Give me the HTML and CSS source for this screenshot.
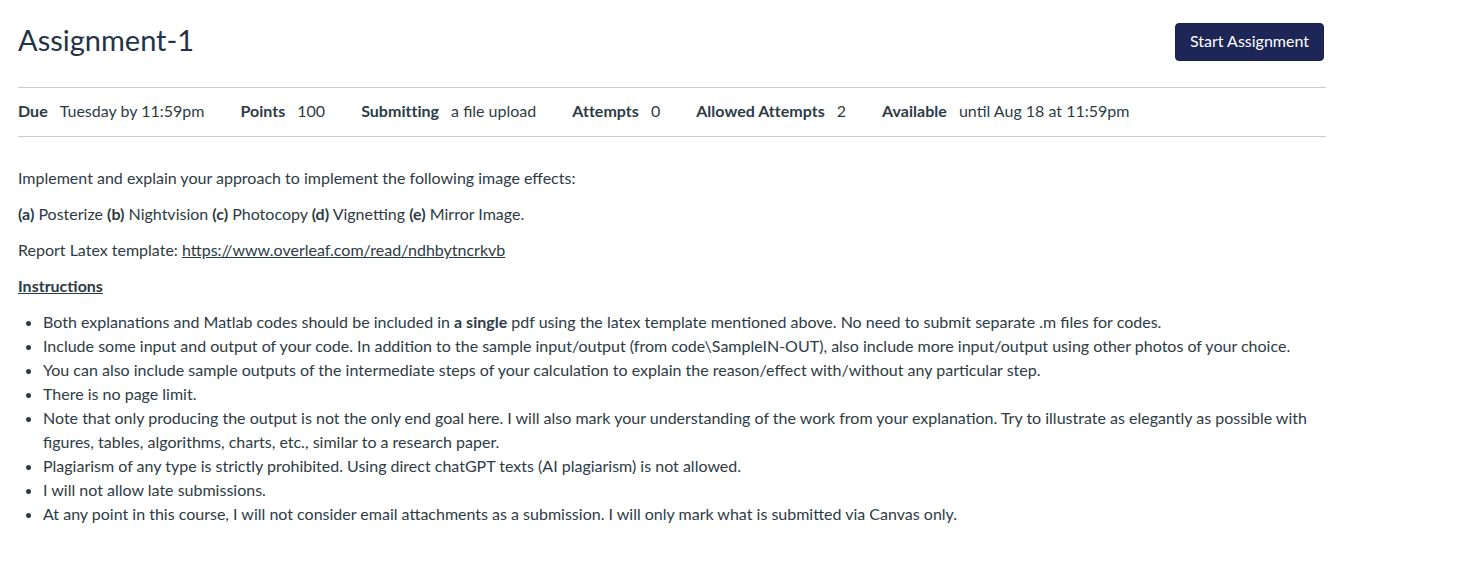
FILE: index.html
```html
<!DOCTYPE html>
<html>
<head>
<meta charset="utf-8">
<link rel="stylesheet" href="styles.css">
</head>
<body>
<div class="page">
  <div class="header">
    <h1 class="title">Assignment-1</h1>
    <button class="start-btn">Start Assignment</button>
  </div>
  <ul class="details">
    <li><span class="label">Due</span><span class="value">Tuesday by 11:59pm</span></li>
    <li><span class="label">Points</span><span class="value">100</span></li>
    <li><span class="label">Submitting</span><span class="value">a file upload</span></li>
    <li><span class="label">Attempts</span><span class="value">0</span></li>
    <li><span class="label">Allowed Attempts</span><span class="value">2</span></li>
    <li><span class="label">Available</span><span class="value">until Aug 18 at 11:59pm</span></li>
  </ul>
  <div class="description">
    <p>Implement and explain your approach to implement the following image effects:</p>
    <p><strong>(a)</strong> Posterize <strong>(b)</strong> Nightvision <strong>(c)</strong> Photocopy <strong>(d)</strong> Vignetting <strong>(e)</strong> Mirror Image.</p>
    <p>Report Latex template: <a href="#">https://www.overleaf.com/read/ndhbytncrkvb</a></p>
    <p><strong class="underline">Instructions</strong></p>
    <ul class="instructions">
      <li>Both explanations and Matlab codes should be included in <strong>a single</strong> pdf using the latex template mentioned above. No need to submit separate .m files for codes.</li>
      <li>Include some input and output of your code. In addition to the sample input/output (from code\SampleIN-OUT), also include more input/output using other photos of your choice.</li>
      <li>You can also include sample outputs of the intermediate steps of your calculation to explain the reason/effect with/without any particular step.</li>
      <li>There is no page limit.</li>
      <li>Note that only producing the output is not the only end goal here. I will also mark your understanding of the work from your explanation. Try to illustrate as elegantly as possible with figures, tables, algorithms, charts, etc., similar to a research paper.</li>
      <li>Plagiarism of any type is strictly prohibited. Using direct chatGPT texts (AI plagiarism) is not allowed.</li>
      <li>I will not allow late submissions.</li>
      <li>At any point in this course, I will not consider email attachments as a submission. I will only mark what is submitted via Canvas only.</li>
    </ul>
  </div>
</div>
</body>
</html>
```

FILE: styles.css
```css
html, body {
  margin: 0;
  padding: 0;
  background: #ffffff;
}

body {
  font-family: Lato, "Liberation Sans", sans-serif;
  color: #2d3b45;
  font-size: 16px;
  line-height: 1.5;
}

.page {
  width: 1308px;
  padding: 0 18px;
}

.header {
  display: flex;
  justify-content: space-between;
  align-items: center;
  padding-top: 23px;
  padding-bottom: 26px;
}

.title {
  margin: 0;
  font-size: 29px;
  font-weight: 400;
  line-height: 36px;
  color: #243447;
  position: relative;
  top: -2px;
}

.start-btn {
  font-family: Lato, "Liberation Sans", sans-serif;
  font-size: 16px;
  font-weight: 400;
  color: #ffffff;
  background: #1d2656;
  border: 1px solid #1a224c;
  border-radius: 4px;
  height: 38px;
  padding: 0 14px 2px;
  margin-right: 2px;
  line-height: 34px;
}

.details {
  list-style: none;
  margin: 0;
  padding: 11px 0 13px;
  border-top: 1px solid #c7cdd1;
  border-bottom: 1px solid #c7cdd1;
  display: flex;
}

.details li {
  margin-right: 36px;
  line-height: 24px;
}

.label {
  font-weight: 700;
  margin-right: 12px;
  letter-spacing: 0.03px;
}

.description {
  padding-top: 17px;
}

.description p {
  margin: 12px 0;
}

.description a {
  color: #2d3b45;
  text-decoration: underline;
}

.underline {
  text-decoration: underline;
}

.instructions {
  margin: 12px 0;
  padding-left: 25px;
}

.instructions li {
  line-height: 24px;
}
```
